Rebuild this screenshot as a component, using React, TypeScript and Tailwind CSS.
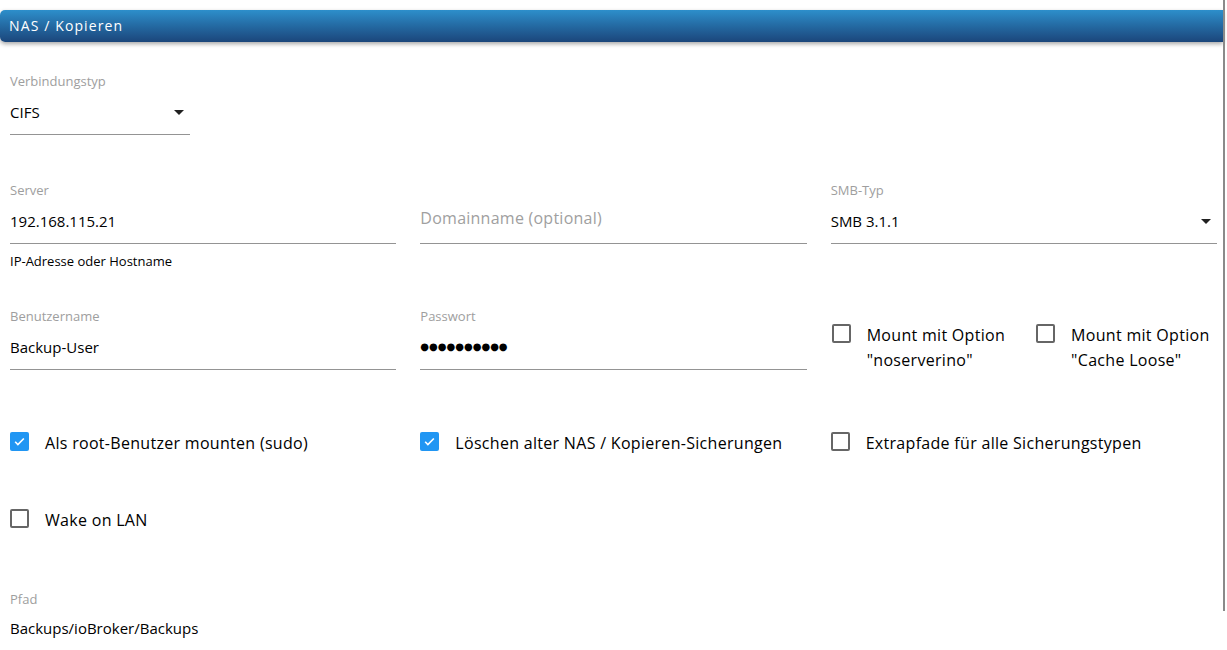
import React from "react";

const FONT = { fontFamily: '"Open Sans", "Noto Sans", sans-serif' };

const Arrow = () => (
  <svg width="10" height="5" viewBox="7 10 10 5" className="shrink-0">
    <path d="M7 10l5 5 5-5z" fill="#000" fillOpacity="0.87" />
  </svg>
);

const Field = ({
  label,
  value,
  select,
  className = "",
  children,
}: {
  label: string;
  value?: string;
  select?: boolean;
  className?: string;
  children?: React.ReactNode;
}) => (
  <div className={className}>
    <div className="h-[16px] text-[13px] leading-[16px] text-[#9e9e9e]">{label}</div>
    <div className="mt-[13px] flex h-[20px] items-center justify-between border-b border-[#949494] pb-[12px] box-content pr-[6px]">
      {children ?? <span className="text-[15px] leading-[20px] text-black">{value}</span>}
      {select && <Arrow />}
    </div>
  </div>
);

const Check = ({ checked, label }: { checked?: boolean; label: React.ReactNode }) => (
  <div className="flex items-start gap-[16px]">
    {checked ? (
      <span className="mt-[1px] flex h-[19px] w-[19px] shrink-0 items-center justify-center rounded-[2px] bg-[#2196f3]">
        <svg width="13" height="13" viewBox="0 0 24 24">
          <path d="M4 12.5l5 5L20 6.5" fill="none" stroke="#fff" strokeWidth="3" />
        </svg>
      </span>
    ) : (
      <span className="mt-[1px] h-[19px] w-[19px] shrink-0 rounded-[2px] border-2 border-[#666]" />
    )}
    <span className="text-[16px] leading-[25px] tracking-[0.3px] text-black">{label}</span>
  </div>
);

export default function App() {
  return (
    <div className="relative h-[650px] w-[1227px] overflow-hidden bg-white" style={FONT}>
      {/* scrollbar-ish right edge */}
      <div className="absolute right-[2px] top-0 h-[611px] w-[2px] bg-[#8a8a8a]" />

      <div className="pt-[10px] pr-[4px]">
        <div className="flex h-[32px] items-center rounded-l-[5px] bg-gradient-to-b from-[#2d8fcb] to-[#1b467b] pl-[9px] shadow-[0_2px_4px_rgba(0,0,0,0.35)]">
          <span className="-mt-[1px] text-[14px] tracking-[0.08em] text-white">NAS / Kopieren</span>
        </div>
      </div>

      <div className="w-[1217px] pl-[10px]">
        <Field label="Verbindungstyp" value="CIFS" select className="mt-[31px] w-[180px]" />

        <div className="mt-[47px] grid grid-cols-3 gap-x-6">
          <div>
            <Field label="Server" value="192.168.115.21" />
            <div className="mt-[10px] text-[13px] leading-[14px] text-black">IP-Adresse oder Hostname</div>
          </div>
          <div className="flex h-[62px] items-end border-b border-[#949494]">
            <span className="mb-[14px] text-[16px] leading-[22px] tracking-[0.25px] text-[#a0a0a0]">
              Domainname (optional)
            </span>
          </div>
          <Field label="SMB-Typ" value="SMB 3.1.1" select />
        </div>

        <div className="mt-[40px] grid grid-cols-3 gap-x-6">
          <Field label="Benutzername" value="Backup-User" />
          <Field label="Passwort">
            <span className="text-[10px] leading-[20px] text-black" style={{ fontFamily: '"DejaVu Sans", sans-serif' }}>
              ●●●●●●●●●●
            </span>
          </Field>
          <div className="flex gap-[31px] pt-[15px] pl-[1px]">
            <Check label={<>Mount mit Option<br />"noserverino"</>} />
            <Check label={<>Mount mit Option<br />"Cache Loose"</>} />
          </div>
        </div>

        <div className="mt-[58px] grid grid-cols-3 gap-x-6">
          <Check checked label="Als root-Benutzer mounten (sudo)" />
          <Check checked label="Löschen alter NAS / Kopieren-Sicherungen" />
          <Check label="Extrapfade für alle Sicherungstypen" />
        </div>

        <div className="mt-[52px]">
          <Check label="Wake on LAN" />
        </div>

        <div className="mt-[58px]">
          <div className="h-[16px] text-[13px] leading-[16px] text-[#9e9e9e]">Pfad</div>
          <div className="mt-[11px] text-[15px] leading-[20px] text-black">Backups/ioBroker/Backups</div>
        </div>
      </div>
    </div>
  );
}
